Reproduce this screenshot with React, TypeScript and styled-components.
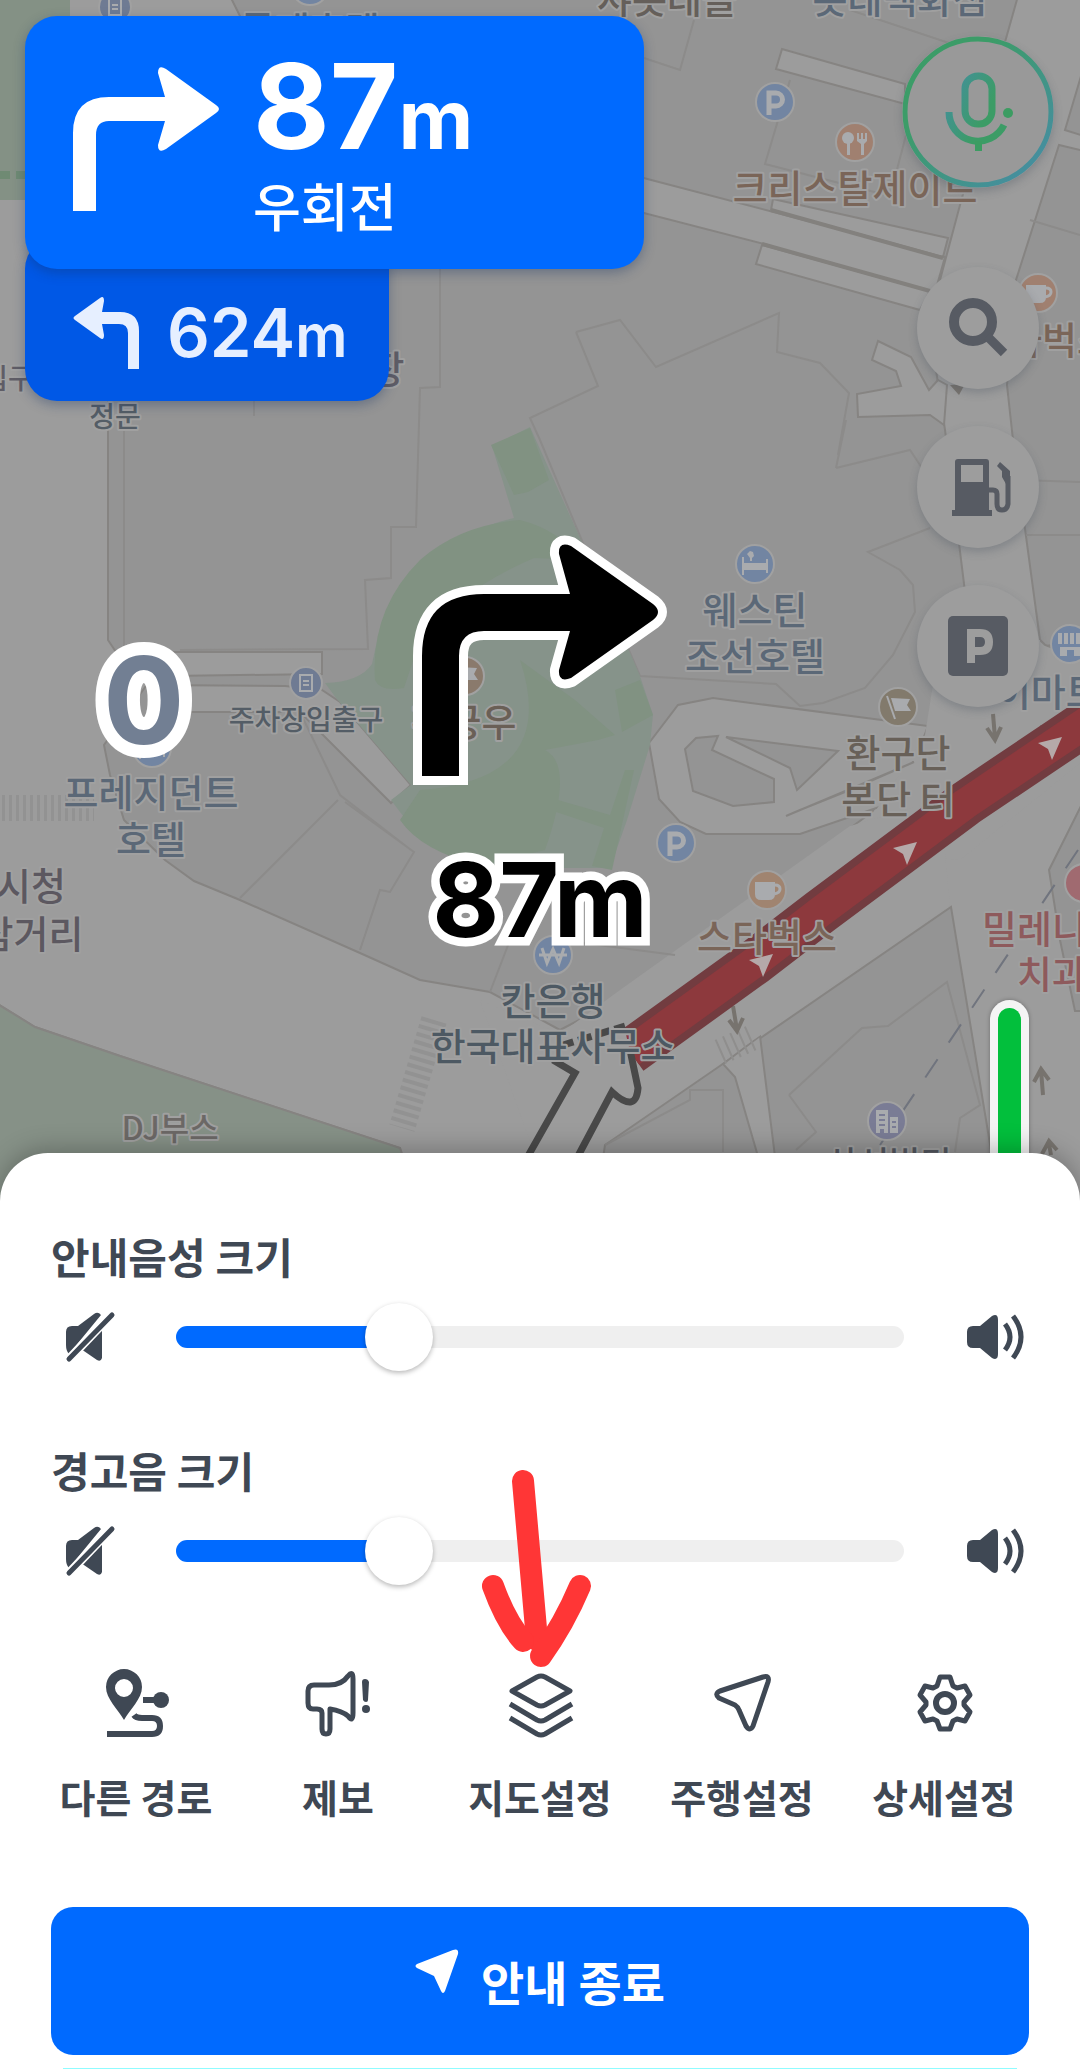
import React, { useId, useState } from "react";
import styled, { createGlobalStyle } from "styled-components";

const ink = "#3f4854";
const blue = "#006aff";

const GlobalStyle = createGlobalStyle`
  * { box-sizing: border-box; }
  body {
    margin: 0;
    background: #ffffff;
    font-family: Inter, "Noto Sans CJK KR", sans-serif;
    color: ${ink};
  }
  button, input { font: inherit; }
`;

const Screen = styled.main`
  display: flex;
  flex-direction: column;
  min-height: 100vh;
`;

/* ---------- map ---------- */

const MapArea = styled.section`
  position: relative;
  flex: 1;
  min-height: 1201px;
  margin-bottom: -48px;
  padding: 16px 26px 0 25px;
  overflow: hidden;
  background: #949494;
`;

const MapDrawing = styled.svg`
  position: absolute;
  inset: 0;
  width: 100%;
  height: 100%;
`;

const MapText = styled.text<{ $size: number }>`
  font-family: "Noto Sans CJK KR", sans-serif;
  font-size: ${(p) => p.$size}px;
  font-weight: 500;
  text-anchor: middle;
  paint-order: stroke;
  stroke: #a0a0a0;
  stroke-width: 4px;
  stroke-linejoin: round;
`;

type Label = { t: string; x: number; y: number; c: string; s?: number };

const hotel = "#5b6877";
const brown = "#7a6558";
const labels: Label[] = [
  { t: "롯데호텔", x: 310, y: 30, c: hotel },
  { t: "샤롯데믈", x: 667, y: -1, c: "#655f5a" },
  { t: "롯데백화점", x: 900, y: -1, c: hotel },
  { t: "크리스탈제이트", x: 855, y: 188, c: brown },
  { t: "스타벅스", x: 1042, y: 340, c: brown },
  { t: "주차장", x: 352, y: 369, c: "#5f5d66" },
  { t: "입구", x: 8, y: 379, c: "#5f5d66", s: 28 },
  { t: "정문", x: 115, y: 417, c: "#545d66", s: 28 },
  { t: "웨스틴", x: 755, y: 610, c: hotel },
  { t: "조선호텔", x: 755, y: 656, c: hotel },
  { t: "이마트24", x: 1070, y: 692, c: hotel },
  { t: "주차장입출구", x: 306, y: 720, c: "#545d66", s: 28 },
  { t: "황궁우", x: 464, y: 722, c: "#6a5f56" },
  { t: "환구단", x: 898, y: 753, c: "#686058" },
  { t: "본단 터", x: 898, y: 799, c: "#686058" },
  { t: "프레지던트", x: 151, y: 793, c: hotel },
  { t: "호텔", x: 151, y: 839, c: hotel },
  { t: "시청", x: 31, y: 886, c: "#5c5860" },
  { t: "삼거리", x: 31, y: 934, c: "#5c5860" },
  { t: "스타벅스", x: 767, y: 937, c: brown },
  { t: "밀레니엄", x: 1052, y: 929, c: "#8e5a5c" },
  { t: "치과의원", x: 1087, y: 974, c: "#8e5a5c" },
  { t: "칸은행", x: 553, y: 1001, c: "#4d5963" },
  { t: "한국대표사무소", x: 553, y: 1046, c: "#4d5963" },
  { t: "DJ부스", x: 170, y: 1128, c: "#6c6866", s: 32 },
  { t: "삼성빌딩", x: 889, y: 1163, c: "#54575f", s: 34 },
];

type PinKind = "p" | "food" | "cup" | "bed" | "store" | "flag" | "won" | "office" | "door" | "plain";
type PinData = { k: PinKind; x: number; y: number; c: string; r?: number };

const pinBlue = "#7285a2";
const pins: PinData[] = [
  { k: "door", x: 115, y: 7, c: "#6f7b93", r: 16 },
  { k: "plain", x: 310, y: -14, c: pinBlue },
  { k: "p", x: 775, y: 102, c: pinBlue },
  { k: "food", x: 855, y: 142, c: "#a08070" },
  { k: "cup", x: 1038, y: 293, c: "#a08070" },
  { k: "bed", x: 755, y: 564, c: pinBlue },
  { k: "store", x: 1070, y: 644, c: pinBlue },
  { k: "door", x: 306, y: 683, c: "#6f7b93", r: 16 },
  { k: "flag", x: 465, y: 676, c: "#8a7a6c" },
  { k: "flag", x: 898, y: 707, c: "#827a6c" },
  { k: "bed", x: 152, y: 748, c: pinBlue },
  { k: "p", x: 676, y: 843, c: pinBlue },
  { k: "cup", x: 767, y: 890, c: "#a08470" },
  { k: "plain", x: 1084, y: 883, c: "#a06a70" },
  { k: "won", x: 553, y: 955, c: pinBlue },
  { k: "office", x: 887, y: 1121, c: "#7a7c95" },
];

const pinFill = "#a9abae";

function PinGlyph({ k }: { k: PinKind }) {
  switch (k) {
    case "p":
      return <path d="M-6 13V-9H1a6 6 0 0 1 0 13H-6" fill="none" stroke={pinFill} strokeWidth="5" />;
    case "food":
      return (
        <g fill={pinFill}>
          <circle cx="-7" cy="-4" r="6" />
          <path d="M-8 0h3v13h-3zM2-9h2v6h2v-6h2v6h2v-6h2v8l-3 3v11H6V2L2-1z" />
        </g>
      );
    case "cup":
      return (
        <g>
          <path d="M-12-8H8V4q0 6-6 6h-8q-6 0-6-6z" fill={pinFill} />
          <path d="M8-5q5 0 5 4T7 4" fill="none" stroke={pinFill} strokeWidth="3" />
        </g>
      );
    case "bed":
      return (
        <g fill={pinFill}>
          <path d="M-13-7h2v6h22v-4h2v14h-2V6h-22v5h-2z" />
          <path d="M-8-10l3-3 3 1 1 4-2 2v3h-2v-3z" />
        </g>
      );
    case "store":
      return (
        <g fill={pinFill}>
          <path d="M-12-11h4V0h-4zM-6-11h4V0h-4zM0-11h4V0H0zM6-11h5V0H6z" />
          <path d="M-10 3h20v9H4V6h-7v6h-7z" />
        </g>
      );
    case "flag":
      return (
        <g>
          <path d="M-11-11L-3 12" stroke={pinFill} strokeWidth="2" />
          <path d="M-7-9L12-8 9-2l4 6H-3z" fill={pinFill} />
        </g>
      );
    case "won":
      return <path d="M-11-7L-6 8 0-6 6 8 11-7M-14 0h28" fill="none" stroke={pinFill} strokeWidth="3" />;
    case "office":
      return (
        <g fill={pinFill}>
          <path
            fillRule="evenodd"
            d="M-11-11H1v23h-4V8h-4v4h-4zM-8-7v2h6v-2zM-8-2v2h6v-2zM-8 3v2h6V3zM3-4h8v16H3zM5 0v2h4V0zM5 5v2h4V5z"
          />
        </g>
      );
    case "door":
      return (
        <g fill="none" stroke={pinFill} strokeWidth="2">
          <path d="M-6-8H6V8H-6zM-3-2H3M3 2H-3" />
        </g>
      );
    default:
      return null;
  }
}

function Pin({ k, x, y, c, r = 19 }: PinData) {
  return (
    <g transform={`translate(${x} ${y})`}>
      <circle r={r} fill={c} stroke="#a1a1a1" strokeWidth="2" />
      <PinGlyph k={k} />
    </g>
  );
}

const road = "#9c9c9c";
const edge = "#868482";
const block = "#949494";

function CityMap() {
  return (
    <MapDrawing viewBox="0 0 1080 1201" preserveAspectRatio="xMidYMin slice" role="img" aria-label="지도">
      <rect width="1080" height="1201" fill={block} />

      {/* main road surfaces */}
      <g fill={road} stroke={edge} strokeWidth="2">
        <path d="M-4 -4H230L240 16V200H108V640L116 652H170L104 745L110 775L124 820L165 860L194 881L240 900L360 953L420 980L490 992L560 1030L602 1008L675 955L800 865L872 812L928 726L960 640L1040 640L1046 646L1084 640V800L1049 870L1060 940L1075 1011H1084V1205H1000L951 907L605 1145L596 1205H410L400 1148L120 1056L35 1027L-4 1003Z" />
        <path d="M1018 -4L1005 42L960 205L940 280L930 330L945 430L966 600L950 670L928 726L1084 726V660L1045 645L1040 640L1013 440L1007 385L1016 280L1059 145L1084 151V136L1065 130L1084 66V-4Z" />
        <path d="M636 176L945 257L930 310L762 264L768 245L636 211Z" />
        <path d="M773 199L948 238L943 257L771 210Z" />
        <path d="M762 245L756 264L920 310L930 291Z" />
        <path d="M782 49L776 69L905 104V84Z" />
        <path d="M878 341L872 360L896 371L901 386L857 394L858 417L930 415L944 425L947 385L938 380L929 390L911 357Z" />
        <path d="M649 743L678 705L713 698L928 726L900 800L800 834H706L680 822L659 799Z" />
        <path d="M170 652H322V674L170 676ZM150 685L285 686L322 690L340 702L411 785L391 803L300 712H150Z" />
        <path d="M723 1064L760 1036L781 1205H770L757 1153L735 1077Z" />
      </g>
      <path d="M940 640H1040V745L1084 700V760L960 860L850 850L925 735Z" fill={road} />
      <path d="M560 1034L620 990L850 826L940 800L950 905L605 1142H530L480 1000Z" fill={road} />
      <path d="M771 210L943 258M762 244L930 291" stroke="#83817e" strokeWidth="4" />

      {/* islands inside the loop road */}
      <g fill={block} stroke={edge} strokeWidth="2">
        <path d="M696 738L685 749L693 791L733 806L774 802V779L712 750L718 736Z" />
        <path d="M726 737L838 751L797 790L790 768Z" />
        <path d="M914 762L786 816L800 810L850 790Z" />
      </g>
      <path d="M0 198V0H70V200H0Z" fill="#849185" />
      <path d="M0 175H36" stroke="#6f8a73" strokeWidth="8" strokeDasharray="10 6" />

      {/* building outlines */}
      <g fill="none" stroke="#8c8b8a" strokeWidth="2">
        <path d="M440 269V387L420 388L416 527H391V578L365 580L368 649L180 650M124 430V650M254 401V416" />
        <path d="M576 332L620 320L656 367L779 313L777 352L820 363L849 393L838 455M576 332L598 386L530 418L540 440L590 560L640 676L776 684L800 706L823 703L865 688L893 655L915 612L913 585L900 570L868 552L930 528M836 468L846 420M836 468L910 450L930 480" />
        <path d="M850 10L1000 60M790 80L765 164L890 196L910 120M1030 220L1080 235M1020 480L1080 482M1026 535H1080M694 20L680 70L644 58" />
        <path d="M300 712L340 795L411 850M338 800L240 898M345 802L414 852L390 892L380 890L360 950M510 940L490 992M560 940L675 955" />
        <path d="M789 1095L862 1028L888 1026L947 982L980 1105L960 1118L955 1152M789 1095L816 1132L796 1150M605 1145L690 1100V1090H723V1152" />
      </g>

      {/* lawns */}
      <path d="M-4 1003L35 1027L120 1056L400 1148L420 1205H-4Z" fill="#869187" stroke={edge} strokeWidth="2" />
      <path d="M325 683Q360 682 372 664Q385 590 440 550Q480 525 514 518L492 446L530 427L590 560L640 676L653 715L650 745L627 820L610 868H520Q440 866 400 812L391 800L411 785L336 698Z" fill="#86938a" />
      <g fill="#819282">
        <path d="M491 445L530 428L549 480L528 492L514 495Z" />
        <path d="M375 680Q370 610 420 560Q460 525 520 520Q560 530 580 560L534 558Q460 590 420 640L404 688Q380 692 375 680Z" />
        <path d="M575 700L615 735L598 740L545 750Q575 765 545 850L480 866Q420 850 400 820L420 790Q560 780 520 660Z" />
        <path d="M615 690L640 680L653 715L622 732ZM558 800L610 815L625 770L634 770L612 870L592 866L604 828L556 812Z" />
      </g>

      {/* crossings */}
      <path d="M2 808H94" stroke="#929292" strokeWidth="26" strokeDasharray="3 4" />
      <path d="M434 1020L402 1128" stroke="#929292" strokeWidth="26" strokeDasharray="4 4" />
      <path d="M720 1052L756 1036" stroke="#8f8e8d" strokeWidth="26" strokeDasharray="2 6" />
      <path d="M1078 850L880 1145" stroke="#70747e" strokeWidth="2" strokeDasharray="22 20" />
      <g fill="none" stroke="#77736e" strokeWidth="4">
        <path d="M993 714L995 738M987 728L995 740L1001 727M733 1006L737 1030M729 1020L737 1031L743 1018M1043 1095L1041 1070M1034 1082L1041 1069L1049 1080M1051 1155L1049 1144M1042 1154L1049 1141L1057 1150" />
      </g>
      <path d="M950 385L965 384L959 395Z" fill="#77736e" />

      {/* coloured route */}
      <g fill="none" strokeLinejoin="round">
        <path d="M630 1052L755 962L820 912L965 804L1090 720" stroke="#723c40" strokeWidth="46" />
        <path d="M630 1052L755 962L820 912L965 804L1090 720" stroke="#8d393d" strokeWidth="31" />
      </g>
      {[[763, 965], [907, 853], [1052, 748]].map(([x, y]) => (
        <path key={x} transform={`translate(${x} ${y})`} d="M-14-5L10-11L0 12L-4 1Z" fill="#b5a9a9" />
      ))}
      <path d="M528 1160L575 1073L553 1060L562 1044L624 1026L638 1086Q638 1112 612 1092L580 1160Z" fill={road} />
      <g fill="none" stroke="#494949" strokeWidth="7">
        <path d="M528 1156L575 1073L553 1060" />
        <path d="M560 1046L625 1026" strokeDasharray="14 5" />
        <path d="M578 1156L612 1092Q636 1114 638 1088L630 1050" />
      </g>

      {pins.map((p, i) => (
        <Pin key={i} {...p} />
      ))}
      {labels.map(({ t, x, y, c, s = 38 }, i) => (
        <MapText key={i} $size={s} x={x} y={y + Math.round(s * 0.37)} fill={c}>
          {t}
        </MapText>
      ))}
    </MapDrawing>
  );
}

/* ---------- guidance on top of the map ---------- */

const Overlay = styled.div`
  position: relative;
  display: flex;
  justify-content: space-between;
  align-items: flex-start;
`;

const TurnCards = styled.div`
  display: flex;
  flex-direction: column;
  align-items: flex-start;
  flex: 0 1 619px;
`;

const NextTurn = styled.div`
  position: relative;
  z-index: 1;
  display: flex;
  align-items: center;
  gap: 34px;
  width: 100%;
  padding: 30px 48px 29px;
  border-radius: 32px;
  background: ${blue};
  color: #ffffff;
  box-shadow: 0 4px 12px rgba(20, 50, 100, 0.35);
`;

const Distance = styled.div`
  font-size: 118px;
  line-height: 120px;
  font-weight: 700;
`;

const Unit = styled.span<{ $size: number }>`
  font-size: ${(p) => p.$size}px;
  line-height: 1;
`;

const TurnName = styled.div`
  margin-top: 12px;
  font-size: 52px;
  line-height: 62px;
  font-weight: 500;
`;

const FollowingTurn = styled.div`
  display: flex;
  align-items: center;
  gap: 28px;
  margin-top: -32px;
  padding: 60px 42px 32px 48px;
  border-radius: 32px;
  background: #0058e6;
  color: #e6efff;
  font-size: 67px;
  line-height: 72px;
  font-weight: 600;
  box-shadow: 0 4px 12px rgba(20, 50, 100, 0.35);
`;

const SideButtons = styled.div`
  display: flex;
  flex-direction: column;
  align-items: center;
  gap: 37px;
  padding-top: 20px;
`;

const RoundButton = styled.button`
  display: grid;
  place-items: center;
  width: 122px;
  height: 122px;
  padding: 0;
  border: 0;
  border-radius: 50%;
  background: #9d9d9d;
  box-shadow: 0 4px 8px rgba(70, 78, 92, 0.3);
`;

const VoiceButton = styled.button`
  width: 152px;
  height: 152px;
  margin-bottom: 42px;
  padding: 0;
  border: 0;
  border-radius: 50%;
  background: #999999;
  box-shadow: 0 4px 8px rgba(70, 78, 92, 0.3);
`;

const Block = styled.svg`
  display: block;
  flex: none;
`;

const CenterGuide = styled.div`
  position: absolute;
  top: 534px;
  left: 50%;
  display: flex;
  flex-direction: column;
  align-items: center;
  gap: 62px;
  transform: translateX(-50%);
`;

const outlined = `
  font-weight: 700;
  -webkit-text-stroke-color: #ffffff;
  paint-order: stroke fill;
`;

const CenterDistance = styled.div`
  ${outlined}
  font-size: 103px;
  line-height: 100px;
  color: #000000;
  -webkit-text-stroke-width: 17px;
`;

const Speed = styled.div`
  ${outlined}
  position: absolute;
  top: 640px;
  left: 103px;
  font-size: 121px;
  line-height: 120px;
  color: #727f93;
  -webkit-text-stroke-width: 26px;
`;

const TrafficBar = styled.div`
  position: absolute;
  top: 1000px;
  bottom: 0;
  right: 51px;
  width: 39px;
  padding: 8px 8px 0;
  border-radius: 20px 20px 0 0;
  background: #f4f4f4;
  box-shadow: 0 0 4px rgba(0, 0, 0, 0.3);

  &::before {
    content: "";
    display: block;
    height: 100%;
    border-radius: 12px 12px 0 0;
    background: #02bf3c;
  }
`;

/* ---------- bottom sheet ---------- */

const Sheet = styled.section`
  position: relative;
  display: flex;
  flex-direction: column;
  padding: 76px 51px 0;
  border-radius: 48px 48px 0 0;
  background: #ffffff;
  box-shadow: 0 -4px 24px rgba(0, 0, 0, 0.25);
`;

const Volumes = styled.div`
  display: flex;
  flex-direction: column;
  gap: 70px;
`;

const VolumeTitle = styled.label`
  display: block;
  font-size: 42px;
  line-height: 60px;
  font-weight: 700;
`;

const VolumeRow = styled.div`
  display: flex;
  align-items: center;
  gap: 50px;
  margin-top: 12px;
  padding: 0 3px;
`;

const Range = styled.input<{ $fill: number }>`
  flex: 1;
  min-width: 0;
  height: 68px;
  margin: 0;
  appearance: none;
  background: transparent;

  &::-webkit-slider-runnable-track {
    height: 22px;
    border-radius: 11px;
    background: linear-gradient(to right, ${blue} ${(p) => p.$fill}%, #efefef ${(p) => p.$fill}%);
  }

  &::-webkit-slider-thumb {
    appearance: none;
    width: 68px;
    height: 68px;
    margin-top: -23px;
    border-radius: 50%;
    background: #ffffff;
    box-shadow: 0 2px 5px rgba(0, 0, 0, 0.28);
  }
`;

const Actions = styled.nav`
  display: grid;
  grid-template-columns: repeat(5, 1fr);
  margin: 80px -16px 0;
`;

const ActionButton = styled.button`
  display: flex;
  flex-direction: column;
  align-items: center;
  gap: 32px;
  padding: 0;
  border: 0;
  background: none;
  color: ${ink};
  font-size: 39px;
  line-height: 56px;
  font-weight: 700;
  white-space: nowrap;
`;

const EndButton = styled.button`
  display: flex;
  align-items: center;
  justify-content: center;
  gap: 22px;
  height: 148px;
  margin-top: 80px;
  padding: 6px 0 0;
  border: 0;
  border-radius: 22px;
  background: ${blue};
  color: #ffffff;
  font-size: 47px;
  line-height: 64px;
  font-weight: 700;
`;

const NextEdge = styled.hr`
  width: calc(100% - 24px);
  height: 1px;
  margin: 13px auto 0;
  border: 0;
  background: #8ffcff;
`;

const HandArrow = styled.svg`
  position: absolute;
  top: 307px;
  left: 50%;
  transform: translateX(-50%);
  pointer-events: none;
`;

function VolumeControl({ title }: { title: string }) {
  const id = useId();
  const steps = 7;
  const [level, setLevel] = useState(2);
  return (
    <div>
      <VolumeTitle htmlFor={id}>{title}</VolumeTitle>
      <VolumeRow>
        <Block width="72" height="72" viewBox="0 0 72 72" aria-hidden="true">
          <path
            fill={ink}
            d="M12 44V31Q12 25 18 25H24L40 13Q44 10 47 14L15 53Q12 50 12 44ZM27 48L48 23V57Q47 61 43 59Z"
          />
          <path d="M15 58L57 14" stroke="#ffffff" strokeWidth="9" />
          <path d="M15 58L58 14" stroke={ink} strokeWidth="5" strokeLinecap="round" />
        </Block>
        <Range
          id={id}
          type="range"
          min={0}
          max={steps}
          value={level}
          $fill={Math.round((level / steps) * 91 + 4)}
          onChange={(e) => setLevel(Number(e.target.value))}
        />
        <Block width="72" height="72" viewBox="0 0 72 72" aria-hidden="true">
          <path
            fill={ink}
            d="M13 31Q13 25 19 25H26L38 15Q44 12 44 19V53Q44 60 38 57L26 47H19Q13 47 13 41Z"
          />
          <path d="M51 23Q61 36 51 49M59 15Q75 36 59 57" fill="none" stroke={ink} strokeWidth="5" />
        </Block>
      </VolumeRow>
    </div>
  );
}

const line = { fill: "none", stroke: ink, strokeWidth: 6, strokeLinejoin: "round" as const };

const actions = [
  {
    name: "다른 경로",
    icon: (
      <>
        <path
          fill={ink}
          fillRule="evenodd"
          d="M24 53C18 42 6 32 6 20a18 18 0 0 1 36 0C42 32 30 42 24 53ZM24 12a9 9 0 1 0 0 18a9 9 0 0 0 0-18Z"
        />
        <circle cx="61" cy="33" r="8" fill={ink} />
        <path d="M43 33H58" stroke={ink} strokeWidth="6" />
        <path d="M34 48Q36 51 42 51H52Q60 51 60 59T52 67H7" {...line} />
      </>
    ),
  },
  {
    name: "제보",
    icon: (
      <>
        <path d="M12 18H27Q40 18 46 9Q51 3 51 12V46Q51 56 46 49Q40 44 28 42V62Q28 67 24 67T20 62V46Q20 42 15 42H11Q6 42 6 36V24Q6 18 12 18Z" {...line} strokeWidth={5} />
        <path d="M60 15Q60 12 63 12T67 15L66 33Q66 35 64 35T61 33Z" fill={ink} />
        <circle cx="64" cy="42" r="4" fill={ink} />
      </>
    ),
  },
  {
    name: "지도설정",
    icon: (
      <path d="M8 24L33 10Q37 8 41 10L66 24L41 38Q37 40 33 38ZM6 37L33 53Q37 55 41 53L68 37M6 51L33 67Q37 69 41 67L68 51" {...line} strokeWidth={5} />
    ),
  },
  {
    name: "주행설정",
    icon: (
      <path d="M14 24L57 10Q64 8 62 15L47 59Q44 65 40 59L33 43Q32 40 29 38L13 31Q8 27 14 24Z" {...line} strokeWidth={5} />
    ),
  },
  {
    name: "상세설정",
    icon: (
      <>
        <path
          d="M32 10H42L45 19L49 21L57 19L62 28L56 35V38L62 45L57 54L49 52L45 54L42 62H32L29 54L25 52L17 54L12 45L18 38V35L12 28L17 19L25 21L29 19Z"
          {...line}
          strokeWidth={5}
        />
        <circle cx="37" cy="36" r="9" {...line} />
      </>
    ),
  },
];

export default function App() {
  return (
    <>
      <GlobalStyle />
      <Screen>
        <MapArea>
          <CityMap />
          <Speed>0</Speed>
          <CenterGuide>
            <Block width="260" height="254" viewBox="410 534 260 254" aria-hidden="true">
              <path
                d="M422 776V656Q422 594 484 594H570L559 554Q558 541 571 546L653 604Q663 612 653 620L571 678Q558 683 559 670L570 631H484Q459 631 459 656V776Z"
                fill="#000000"
                stroke="#ffffff"
                strokeWidth="18"
                paintOrder="stroke"
              />
            </Block>
            <CenterDistance>87m</CenterDistance>
          </CenterGuide>
          <TrafficBar />
          <Overlay>
            <TurnCards>
              <NextTurn>
                <Block width="146" height="152" viewBox="0 0 146 152" aria-hidden="true">
                  <path
                    d="M0 144V66Q0 30 36 30H92L85 6Q85-3 93 2L143 38Q149 42 143 46L93 82Q85 87 85 78L92 54H36Q23 54 23 68V144Z"
                    fill="#ffffff"
                  />
                </Block>
                <div>
                  <Distance>
                    87<Unit $size={82}>m</Unit>
                  </Distance>
                  <TurnName>우회전</TurnName>
                </div>
              </NextTurn>
              <FollowingTurn>
                <Block width="66" height="72" viewBox="0 0 66 72" aria-hidden="true">
                  <path
                    d="M66 72V34Q66 15 47 15H29L31 4Q31-2 27 1L2 19Q-1 21 2 23L27 41Q31 44 31 38L29 27H46Q55 27 55 36V72Z"
                    fill="#e6efff"
                  />
                </Block>
                <span>
                  624<Unit $size={58}>m</Unit>
                </span>
              </FollowingTurn>
            </TurnCards>
            <SideButtons>
              <VoiceButton aria-label="음성 명령">
                <Block width="152" height="152" viewBox="0 0 152 152">
                  <defs>
                    <linearGradient id="ring" x1="0" y1="0" x2="1" y2="1">
                      <stop offset="0.3" stopColor="#3c9c68" />
                      <stop offset="0.85" stopColor="#458f9c" />
                    </linearGradient>
                    <linearGradient id="mic" gradientUnits="userSpaceOnUse" x1="42" y1="60" x2="100" y2="90">
                      <stop offset="0" stopColor="#43909a" />
                      <stop offset="0.7" stopColor="#3c9c66" />
                    </linearGradient>
                  </defs>
                  <circle cx="76" cy="76" r="73" fill="none" stroke="url(#ring)" strokeWidth="5" />
                  <g fill="none" stroke="url(#mic)" strokeWidth="7">
                    <rect x="63" y="40" width="27" height="48" rx="13" />
                    <path d="M47 76A29 29 0 0 0 102 89" />
                  </g>
                  <path d="M73 105h7v10h-7z" fill="#3c9c62" />
                  <circle cx="106" cy="77" r="5" fill="#3c9c62" />
                </Block>
              </VoiceButton>
              <RoundButton aria-label="검색">
                <Block width="60" height="60" viewBox="0 0 60 60">
                  <circle cx="25" cy="24" r="19" fill="none" stroke="#575b63" strokeWidth="10" />
                  <path d="M39 38L56 55" stroke="#575b63" strokeWidth="9" />
                </Block>
              </RoundButton>
              <RoundButton aria-label="주유소">
                <Block width="66" height="60" viewBox="-3 0 66 60">
                  <path
                    fill="#575b63"
                    fillRule="evenodd"
                    d="M7 5Q7 2 10 2H38Q41 2 41 5V53H44V59H4V53H7ZM13 8V25H35V8Z"
                  />
                  <path d="M41 33H45Q49 33 49 37V47Q49 53 54 53T60 47V19" fill="none" stroke="#575b63" strokeWidth="5" />
                  <path d="M52 5L62 14V27H58L54 20V14L49 9Z" fill="#575b63" />
                </Block>
              </RoundButton>
              <RoundButton aria-label="주차장">
                <Block width="60" height="60" viewBox="0 0 60 60">
                  <rect width="60" height="60" rx="5" fill="#575b63" />
                  <path d="M23 47V17H32Q41 17 41 26T32 35H23" fill="none" stroke="#9d9d9d" strokeWidth="8" />
                </Block>
              </RoundButton>
            </SideButtons>
          </Overlay>
        </MapArea>

        <Sheet>
          <Volumes>
            <VolumeControl title="안내음성 크기" />
            <VolumeControl title="경고음 크기" />
          </Volumes>
          <Actions>
            {actions.map((a) => (
              <ActionButton key={a.name}>
                <Block width="72" height="72" viewBox="0 0 72 72" aria-hidden="true">
                  {a.icon}
                </Block>
                {a.name}
              </ActionButton>
            ))}
          </Actions>
          <EndButton>
            <Block width="44" height="70" viewBox="0 0 44 70" aria-hidden="true">
              <path d="M2 15L38 1Q44-1 43 5L30 42Q28 46 26 42L19 27L2 19Q-1 17 2 15Z" fill="#ffffff" />
            </Block>
            안내 종료
          </EndButton>
          <NextEdge />
          <HandArrow width="130" height="220" viewBox="475 1460 130 220" aria-hidden="true">
            <g fill="none" stroke="#ff3636" strokeWidth="22" strokeLinecap="round" strokeLinejoin="round">
              <path d="M523 1481L537 1640" />
              <path d="M493 1586Q506 1622 523 1641" />
              <path d="M580 1586Q564 1624 541 1656" />
            </g>
          </HandArrow>
        </Sheet>
      </Screen>
    </>
  );
}
